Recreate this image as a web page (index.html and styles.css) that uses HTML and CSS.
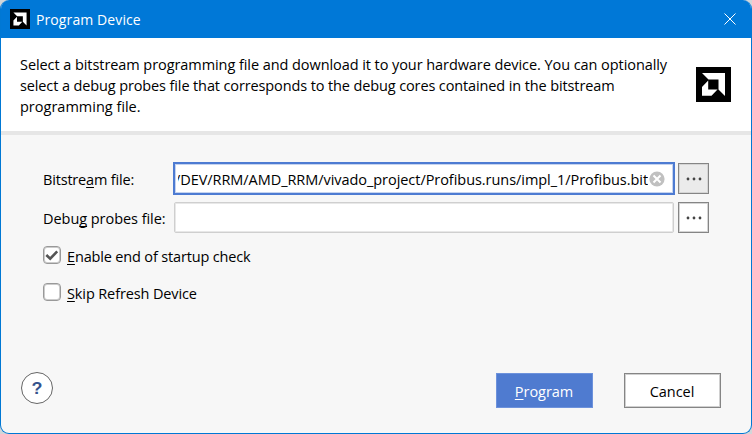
FILE: index.html
```html
<!DOCTYPE html>
<html lang="en">
<head>
<meta charset="utf-8">
<title>Program Device</title>
<link rel="stylesheet" href="styles.css">
</head>
<body>
<div class="window">
  <header class="titlebar">
    <svg class="app-icon" viewBox="0 0 35 35"><rect width="35" height="35"/><path d="M6 6H29V29L22.5 22.5V12.5H12.5ZM12.2 13.5V22.5H21.5L15.5 28.8H6V20Z"/></svg>
    <h1 class="title"><span class="t-title">Program Device</span></h1>
    <svg class="close" viewBox="0 0 12 12"><path d="M.5.5l11 11M11.5.5l-11 11"/></svg>
  </header>
  <section class="intro">
    <p class="description">
      <span class="line t-line1">Select a bitstream programming file and download it to your hardware device. You can optionally</span>
      <span class="line t-line2">select a debug probes file that corresponds to the debug cores contained in the bitstream</span>
      <span class="line t-line3">programming file.</span>
    </p>
    <svg class="logo" viewBox="0 0 35 35"><rect width="35" height="35"/><path d="M6 6H29V29L22.5 22.5V12.5H12.5ZM12.2 13.5V22.5H21.5L15.5 28.8H6V20Z"/></svg>
  </section>
  <main class="form">
    <div class="row">
      <label class="label"><span class="t-bit">Bitstre<u>a</u>m file:</span></label>
      <div class="field focused">
        <span class="value"><span class="t-path">/DEV/RRM/AMD_RRM/vivado_project/Profibus.runs/impl_1/Profibus.bit</span></span>
        <svg class="clear" viewBox="0 0 16 16"><circle cx="8" cy="8" r="7.6"/><path d="M4.5 4.5l7 7M11.5 4.5l-7 7"/></svg>
      </div>
      <button class="browse hover"><svg viewBox="0 0 16 4"><circle cx="2" cy="2" r="1.4"/><circle cx="8" cy="2" r="1.4"/><circle cx="14" cy="2" r="1.4"/></svg></button>
    </div>
    <div class="row">
      <label class="label"><span class="t-debug">Debu<u>g</u> probes file:</span></label>
      <div class="field"></div>
      <button class="browse"><svg viewBox="0 0 16 4"><circle cx="2" cy="2" r="1.4"/><circle cx="8" cy="2" r="1.4"/><circle cx="14" cy="2" r="1.4"/></svg></button>
    </div>
    <div class="option first">
      <span class="checkbox"><svg viewBox="0 0 16 16"><path d="M2.3 8l3.9 3.7L13.2 4.4"/></svg></span>
      <span class="option-text t-enable"><u>E</u>nable end of startup check</span>
    </div>
    <div class="option">
      <span class="checkbox"></span>
      <span class="option-text t-skip"><u>S</u>kip Refresh Device</span>
    </div>
  </main>
  <footer class="actions">
    <button class="help"><span>?</span></button>
    <button class="button primary"><span><u>P</u>rogram</span></button>
    <button class="button"><span>Cancel</span></button>
  </footer>
</div>
</body>
</html>
```
FILE: styles.css
```css
* { box-sizing: border-box; }
body {
  margin: 0;
  background: #d2d6d9;
  font: 14.5px/21px "Open Sans", "Noto Sans", sans-serif;
  color: #000;
}
svg { display: block; flex: none; }
button { padding: 0; font: inherit; color: inherit; display: flex; align-items: center; justify-content: center; }
u { text-decoration-thickness: 1px; text-underline-offset: 2px; text-decoration-skip-ink: none; }
span { white-space: nowrap; }
.t-title { letter-spacing: 0.1px; }
.t-line1 { letter-spacing: -0.07px; }
.t-line2 { letter-spacing: -0.12px; }
.t-bit { letter-spacing: -0.18px; }
.t-debug { letter-spacing: -0.05px; }
.t-path { letter-spacing: -0.05px; }
.t-enable { letter-spacing: -0.16px; }
.t-skip { letter-spacing: -0.12px; }
.window {
  width: 752px;
  height: 434px;
  display: flex;
  flex-direction: column;
  border: 1px solid #0078d4;
  border-top: 0;
  border-radius: 9px;
  overflow: hidden;
  background: #f7f7f7;
}
.titlebar {
  height: 38px;
  flex: none;
  display: flex;
  align-items: center;
  background: #0078d7;
  padding: 0 15px 0 9px;
}
.app-icon { width: 20px; height: 20px; }
.app-icon path, .logo path { fill: #fff; }
.title { margin: 2px 0 0 6px; font-size: 14px; font-weight: 400; line-height: 20px; color: #fff; flex: 1; }
.close { width: 12px; height: 12px; stroke: #fff; fill: none; }
.intro {
  height: 97px;
  flex: none;
  display: flex;
  justify-content: space-between;
  background: #fff;
  border-bottom: 4px solid #e6e6e6;
  padding: 16px 20px 0 19px;
}
.description { margin: 0; }
.line { display: block; }
.logo { width: 35px; height: 35px; margin-top: 13px; }
.form { padding: 27px 0 0 42px; flex: 1; }
.row { display: flex; align-items: center; height: 33px; margin-bottom: 6px; }
.label { width: 131px; flex: none; padding-top: 2px; }
.field {
  width: 500px;
  height: 31px;
  margin: 0 4px 0 0;
  border: 1px solid #cfcfcf;
  border-radius: 2px;
  background: #fff;
  box-shadow: inset 0 0 0 1px #e8e8e8;
  display: flex;
  align-items: center;
}
.focused { width: 502px; height: 33px; margin: 0 3px 0 -1px; border: 2px solid #4d7bd2; border-radius: 0; box-shadow: inset 0 0 0 1px #c5d3ef; }
.value { width: 470px; overflow: hidden; display: flex; justify-content: flex-end; margin: 2px 1px 0 3px; flex: none; }
.clear { width: 16px; height: 16px; }
.clear circle { fill: #c0c0c0; }
.clear path { stroke: #fff; stroke-width: 2; }
.browse { width: 31px; height: 31px; border: 1px solid #858585; background: #fff; box-shadow: inset 0 0 0 1px #d5d5d5; }
.hover { background: #ebebeb; }
.browse svg { width: 16px; height: 4px; fill: #444; }
.option { display: flex; align-items: center; height: 20px; margin-bottom: 17px; gap: 6px; }
.option-text { padding-top: 3px; }
.first { margin-top: 11px; }
.checkbox { width: 18px; height: 18px; border: 1px solid #999; border-radius: 4px; background: #fff; box-shadow: inset 0 0 0 1px #ccc; }
.checkbox svg { width: 16px; height: 16px; fill: none; stroke: #555; stroke-width: 2.6; }
.actions { display: flex; align-items: flex-start; height: 61px; flex: none; padding: 0 30px 0 20px; }
.help {
  width: 32px;
  height: 32px;
  margin-right: auto;
  border: 1px solid #666;
  border-radius: 50%;
  background: #fff;
  color: #35538c;
  font: 700 16px "Liberation Sans", sans-serif;
}
.help span { transform: scaleX(1.12); margin-top: 1px; }
.button { width: 97px; height: 35px; border: 1px solid #858585; background: #fff; margin-left: 31px; padding: 2px 1px 0 0; margin-top: 1px; box-shadow: inset 0 0 0 1px #d0d0d0; letter-spacing: -0.05px; }
.primary { background: #4f7bd0; border-color: #6d92dc; color: #fff; box-shadow: none; }
```
